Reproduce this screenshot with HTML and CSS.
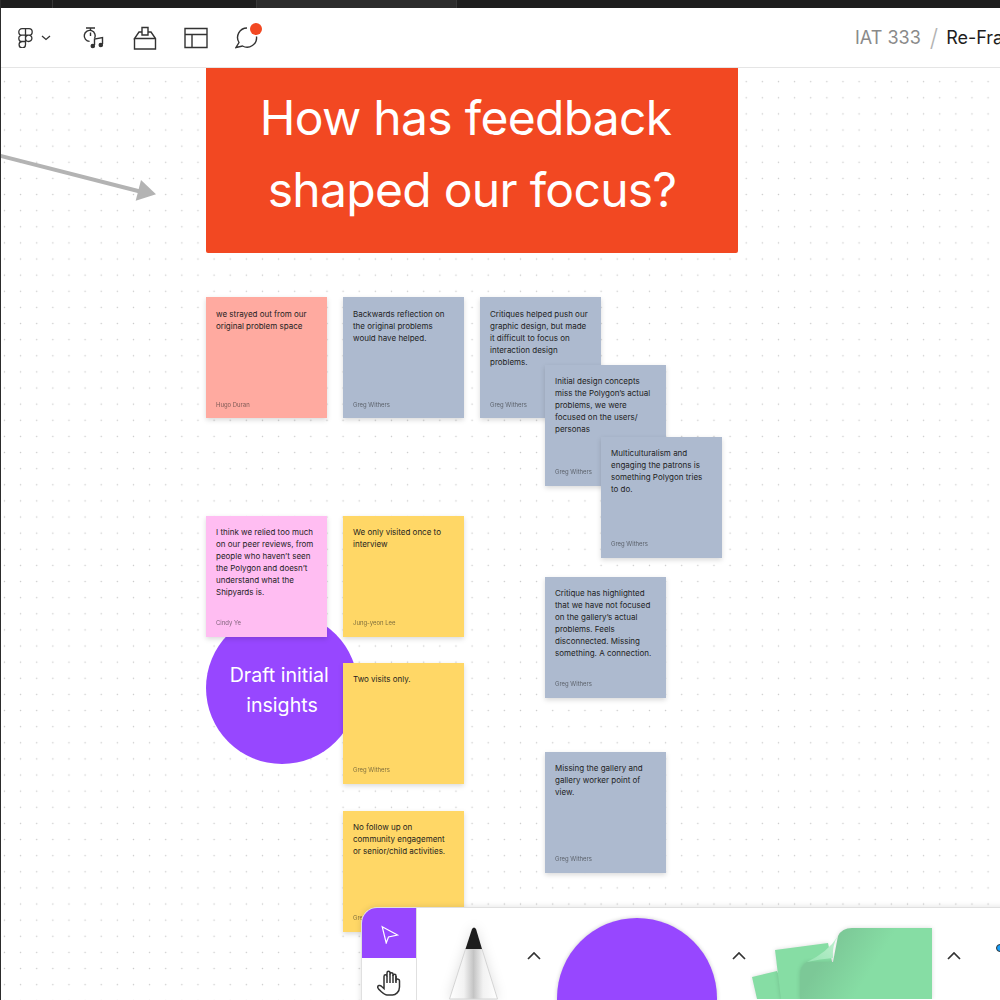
FILE: index.html
```html
<!DOCTYPE html>
<html lang="en">

<head>
    <meta charset="UTF-8">
    <title>Re-Framing - FigJam</title>
    <link rel="stylesheet" href="styles.css">
</head>

<body>
    <div class="tabs">
        <div class="tab tab-home"></div>
        <div class="tab tab-wide"></div>
        <div class="tab tab-active"></div>
        <div class="tab tab-rest"></div>
    </div>

    <header class="topbar">
        <div class="tools">
            <div class="logo">
                <svg width="15" height="20" viewBox="0 0 15 20" fill="none" stroke="#333" stroke-width="1.300">
                    <path d="M7.500.7H4a3.200 3.200 0 0 0 0 6.400h3.500zM7.500.7H11a3.200 3.200 0 0 1 0 6.400H7.500zM7.500 7.100H4a3.200 3.200 0 0 0 0 6.400h3.500zM13.900 10.300a3.200 3.200 0 1 1-6.400 0 3.200 3.200 0 0 1 6.400 0zM7.500 13.500H4a3.200 3.200 0 1 0 3.500 3.200z" />
                </svg>
                <svg width="10" height="6" viewBox="0 0 10 6" fill="none" stroke="#333" stroke-width="1.300">
                    <path d="M1 1l4 3.500L9 1" />
                </svg>
            </div>
            <svg class="icon" width="24" height="24" viewBox="0 0 24 24" fill="none" stroke="#333" stroke-width="1.400">
                <path d="M4 2h9M8.500 2v2" />
                <path d="M12.600 12.500a5.500 5.500 0 1 0-5 2.900M8.500 6.500v3.500" />
                <path d="M12.500 19v-6l8-1.500V18" />
                <circle cx="10.800" cy="20" r="1.600" fill="#333" />
                <circle cx="18.800" cy="19" r="1.600" fill="#333" />
            </svg>
            <svg class="icon" width="24" height="24" viewBox="0 0 24 24" fill="none" stroke="#333" stroke-width="1.400">
                <path d="M1.500 12.500V23h21V12.500L18 6h-3M9 6H6l-4.500 6.500h21" />
                <path d="M9 9V1.500h6V9z" />
            </svg>
            <svg class="icon" width="24" height="24" viewBox="0 0 24 24" fill="none" stroke="#333" stroke-width="1.400">
                <path d="M1 2.500h22v19H1zM1 8.500h22M8 8.500v13" />
            </svg>
            <div class="comment">
                <svg width="24" height="24" viewBox="0 0 24 24" fill="none" stroke="#333" stroke-width="1.400">
                    <path d="M21.500 10.500a9.500 9.500 0 0 1-14 9.500L1 21.500l3-5a9.500 9.500 0 0 1 8-14.500" />
                </svg>
                <span class="dot"></span>
            </div>
        </div>
        <div class="crumbs">
            <span class="team">IAT 333</span>
            <span class="slash">/</span>
            <span class="file">Re-Framing</span>
        </div>
    </header>

    <main class="canvas">
        <svg class="arrow" width="160" height="70" viewBox="0 0 160 70">
            <path d="M0 19.700L142 56" stroke="#b3b3b3" stroke-width="4" />
            <path d="M141 44L156 58.300L135.700 64.700z" fill="#b3b3b3" />
        </svg>

        <section class="banner">How has feedback&nbsp;<br>shaped our focus?</section>

        <div class="bubble">Draft initial&nbsp;<br>insights</div>

        <div class="note red n1 first-row">
            <p>we strayed out from our original problem space</p><span>Hugo Duran</span>
        </div>
        <div class="note blue n2 first-row">
            <p>Backwards reflection on the original problems would have helped.</p><span>Greg Withers</span>
        </div>
        <div class="note blue n3 first-row">
            <p>Critiques helped push our graphic design, but made it difficult to focus on interaction design problems.</p><span>Greg Withers</span>
        </div>
        <div class="note blue n4">
            <p>Initial design concepts miss the Polygon’s actual problems, we were focused on the users/ personas</p><span>Greg Withers</span>
        </div>
        <div class="note blue n5">
            <p>Multiculturalism and engaging the patrons is something Polygon tries to do.</p><span>Greg Withers</span>
        </div>
        <div class="note pink n6">
            <p>I think we relied too much on our peer reviews, from people who haven’t seen the Polygon and doesn’t understand what the Shipyards is.</p><span>Cindy Ye</span>
        </div>
        <div class="note yellow n7">
            <p>We only visited once to interview</p><span>Jung-yeon Lee</span>
        </div>
        <div class="note yellow n8">
            <p>Two visits only.</p><span>Greg Withers</span>
        </div>
        <div class="note yellow n9">
            <p>No follow up on community engagement or senior/child activities.</p><span>Greg Withers</span>
        </div>
        <div class="note blue n10">
            <p>Critique has highlighted that we have not focused on the gallery’s actual problems. Feels disconnected. Missing something. A connection.</p><span>Greg Withers</span>
        </div>
        <div class="note blue n11">
            <p>Missing the gallery and gallery worker point of view.</p><span>Greg Withers</span>
        </div>

        <div class="dock">
            <div class="modes">
                <div class="mode mode-on">
                    <svg width="22" height="22" viewBox="0 0 22 22" fill="none" stroke="#fff" stroke-width="1.200">
                        <path d="M4.200 4.700L19.500 13l-9 2-2.300 6z" />
                    </svg>
                </div>
                <div class="mode">
                    <svg width="24" height="26" viewBox="0 0 24 26" fill="none" stroke="#333" stroke-width="1.500">
                        <path d="M10 25c-3 0-9-6-9.300-7.500-.3-2 2.300-2.800 4-1L7 18.500V6.500c0-2.200 3-2.200 3 0V3c0-2.300 3-2.300 3 0v1.500c0-2.200 3-2.200 3 0V6c0-2.200 3-2.200 3 0v4c1-1.500 3.500-1 3.500.8V17c0 5-4 8-7 8z" />
                        <path d="M10 6v7M13 4v9M16 5v8M19 6v7" />
                    </svg>
                </div>
            </div>
            <div class="tray">
                <div class="pen">
                    <svg width="60" height="92" viewBox="0 0 60 92">
                        <defs>
                            <linearGradient id="penBody">
                                <stop offset="0" stop-color="#fff" />
                                <stop offset=".3" stop-color="#f2f2f2" />
                                <stop offset=".5" stop-color="#c4c4c4" />
                                <stop offset=".7" stop-color="#f2f2f2" />
                                <stop offset="1" stop-color="#fff" />
                            </linearGradient>
                        </defs>
                        <path d="M21.500 41L5.500 91h48L38 41z" fill="url(#penBody)" stroke="#d4d4d4" />
                        <path d="M21.500 41L28 21q2-3 4 0l6 20z" fill="#1e1e1e" />
                    </svg>
                </div>
                <svg class="caret" width="14" height="10" viewBox="0 0 14 10" fill="none" stroke="#333" stroke-width="1.700">
                    <path d="M1 8l6-6 6 6" />
                </svg>
                <div class="shape"></div>
                <svg class="caret" width="14" height="10" viewBox="0 0 14 10" fill="none" stroke="#333" stroke-width="1.700">
                    <path d="M1 8l6-6 6 6" />
                </svg>
                <div class="pad">
                    <svg width="190" height="80" viewBox="0 0 190 80">
                        <defs>
                            <linearGradient id="padFold" gradientUnits="userSpaceOnUse" x1="85" y1="20" x2="125" y2="45">
                                <stop offset="0" stop-color="#7cc897" />
                                <stop offset="1" stop-color="#86dda4" />
                            </linearGradient>
                            <linearGradient id="padCurl" x1="0" y1="1" x2="1" y2="0">
                                <stop offset="0" stop-color="#98e4b3" />
                                <stop offset="1" stop-color="#c2f1d2" />
                            </linearGradient>
                        </defs>
                        <path class="sheet" d="M2 58L27 52L40 80H7z" fill="#86dda4" />
                        <path class="sheet" d="M25 31L78 24L90 80H31z" fill="#86dda4" />
                        <path class="sheet" d="M182 9V80H50V57Q50 46 57 43H83L88 17Q92 9 102 9z" fill="url(#padFold)" />
                        <path d="M88 17Q78 33 57 43Q70 40 83 39Q82 26 88 17z" fill="url(#padCurl)" />
                    </svg>
                </div>
                <svg class="caret" width="14" height="10" viewBox="0 0 14 10" fill="none" stroke="#333" stroke-width="1.700">
                    <path d="M1 8l6-6 6 6" />
                </svg>
                <div class="next"></div>
            </div>
        </div>
    </main>
</body>

</html>
```

FILE: styles.css
```css
* {
    margin: 0;
    padding: 0;
    box-sizing: border-box;
}

html,
body {
    width: 1000px;
    height: 1000px;
    overflow: hidden;
}

body {
    display: flex;
    flex-direction: column;
    font-family: Inter, "Liberation Sans", sans-serif;
    background-color: #fff;
    border-left: 1px solid #2c2c2c;
}

.tabs {
    height: 8px;
    display: flex;
    background-color: #1e1e1e;
    flex-shrink: 0;
    margin-left: -1px;
}

.tab {
    border-right: 1px solid #383838;
}

.tab-home {
    width: 53px;
}

.tab-wide {
    width: 204px;
}

.tab-active {
    width: 200px;
    background-color: #2c2c2c;
}

.tab-rest {
    flex: 1;
    border-right: 0;
}

.topbar {
    height: 60px;
    flex-shrink: 0;
    display: flex;
    align-items: center;
    justify-content: space-between;
    background-color: #fff;
    border-bottom: 1px solid #e5e5e5;
    padding-left: 17px;
    overflow: hidden;
    white-space: nowrap;
}

.tools {
    display: flex;
    align-items: center;
    gap: 27px;
}

.logo {
    display: flex;
    align-items: center;
    gap: 8px;
    width: 37px;
}

.icon {
    display: block;
}

.comment {
    position: relative;
    height: 24px;
}

.dot {
    position: absolute;
    top: -3px;
    right: -3px;
    width: 12px;
    height: 12px;
    border-radius: 50%;
    background-color: #f24822;
}

.crumbs {
    width: 145px;
    flex-shrink: 0;
    display: flex;
    align-items: center;
    font-size: 18px;
    overflow: hidden;
}

.team {
    color: #8a8a8a;
}

.slash {
    color: #b3b3b3;
    font-size: 24px;
    font-weight: 300;
    margin: 0 8px 0 9px;
}

.file {
    color: #1e1e1e;
}

.canvas {
    position: relative;
    flex: 1;
    overflow: hidden;
    background-color: #fff;
    background-image: radial-gradient(circle at center, #c8c8c8 0, #c8c8c8 .7px, transparent 1px);
    background-size: 16.13px 16.13px;
    background-position: -4.6px 5.6px;
}

.arrow {
    position: absolute;
    left: -1px;
    top: 68px;
    overflow: visible;
}

.banner {
    position: absolute;
    left: 205px;
    top: -8px;
    width: 532px;
    height: 193px;
    padding-top: 22px;
    background-color: #f24822;
    border-radius: 2px;
    color: #fff;
    font-size: 48px;
    line-height: 72px;
    letter-spacing: -.7px;
    text-align: center;
}

.bubble {
    position: absolute;
    left: 205px;
    top: 544px;
    width: 152px;
    height: 152px;
    padding-top: 48px;
    border-radius: 50%;
    background-color: #9747ff;
    color: #fff;
    font-size: 19.600px;
    line-height: 30px;
    text-align: center;
}

.note {
    position: absolute;
    width: 121px;
    height: 121px;
    padding: 10px 12px 10px 10px;
    box-shadow: 0 2px 5px rgba(0, 0, 0, .15);
    color: #1e1e1e;
}

.note p {
    font-size: 8px;
    line-height: 12.100px;
}

.note span {
    position: absolute;
    left: 10px;
    bottom: 10.500px;
    font-size: 5.950px;
    line-height: 8px;
    opacity: .6;
}

.first-row {
    padding-top: 11px;
}

.first-row span {
    bottom: 9.500px;
}

.red {
    background-color: #ffaaa0;
}

.blue {
    background-color: #adbacf;
}

.pink {
    background-color: #ffbdf2;
}

.yellow {
    background-color: #ffd766;
}

.n1 {
    left: 205px;
    top: 229px;
}

.n2 {
    left: 342px;
    top: 229px;
}

.n3 {
    left: 479px;
    top: 229px;
}

.n4 {
    left: 544px;
    top: 297px;
}

.n5 {
    left: 600px;
    top: 369px;
}

.n6 {
    left: 205px;
    top: 448px;
}

.n7 {
    left: 342px;
    top: 448px;
}

.n8 {
    left: 342px;
    top: 595px;
}

.n9 {
    left: 342px;
    top: 743px;
}

.n10 {
    left: 544px;
    top: 509px;
}

.n11 {
    left: 544px;
    top: 684px;
}

.dock {
    position: absolute;
    left: 360px;
    top: 839px;
    width: 660px;
    height: 110px;
    display: flex;
    background-color: #fff;
    border: 1px solid #e0e0e0;
    border-radius: 16px 0 0 0;
    box-shadow: 0 0 6px rgba(0, 0, 0, .12);
    overflow: hidden;
}

.modes {
    width: 55px;
    flex-shrink: 0;
    border-right: 1px solid #e0e0e0;
}

.mode {
    height: 50px;
    display: flex;
    align-items: center;
    justify-content: center;
}

.mode-on {
    background-color: #9747ff;
}

.tray {
    flex: 1;
    display: flex;
    align-items: flex-start;
}

.pen {
    margin-left: 27px;
    width: 60px;
    filter: drop-shadow(0 0 6px rgba(0, 0, 0, .12));
}

.caret {
    flex-shrink: 0;
    margin-top: 43px;
}

.pen + .caret {
    margin-left: 23px;
}

.shape {
    flex-shrink: 0;
    width: 160px;
    height: 160px;
    margin: 10px 15px 0 16px;
    border-radius: 50%;
    background-color: #9747ff;
    box-shadow: 0 0 4px rgba(0, 0, 0, .2);
}

.pad {
    flex-shrink: 0;
    margin: 11px 7px 0 4px;
}

.sheet {
    filter: drop-shadow(0 0 2px rgba(0, 0, 0, .14));
}

.next {
    flex-shrink: 0;
    width: 8px;
    height: 8px;
    margin: 36px 0 0 35px;
    border: 1px solid #333;
    border-radius: 50%;
    background-color: #18a0fb;
}
```
